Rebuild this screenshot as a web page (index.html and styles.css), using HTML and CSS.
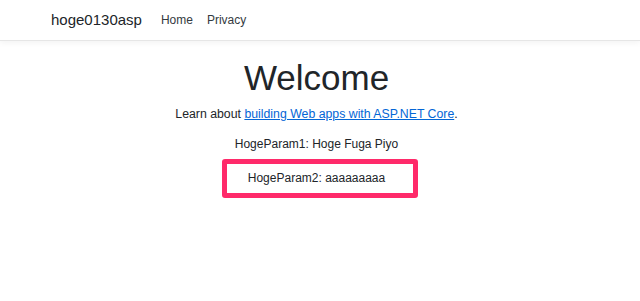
FILE: index.html
```html
<!DOCTYPE html>
<html>
  <head>
    <meta charset="utf-8">
    <title>Home Page - hoge0130asp</title>
    <link rel="stylesheet" href="styles.css">
  </head>
  <body>
    <header class="navbar">
      <a class="brand" href="#">hoge0130asp</a>
      <nav class="nav">
        <a href="#">Home</a>
        <a href="#">Privacy</a>
      </nav>
    </header>
    <main class="content">
      <h1>Welcome</h1>
      <p class="lead">Learn about <a href="#">building Web apps with ASP.NET Core</a>.</p>
      <p class="param">HogeParam1: Hoge Fuga Piyo</p>
      <div class="highlight">
        <p class="param">HogeParam2: aaaaaaaaa</p>
      </div>
    </main>
  </body>
</html>
```

FILE: styles.css
```css
body {
  margin: 0;
  font-family: "Liberation Sans", Arial, sans-serif;
  font-size: 12px;
  line-height: 18px;
  color: #212529;
  background: #fff;
}

a {
  color: #0366d6;
}

.navbar {
  display: flex;
  align-items: center;
  height: 40px;
  padding: 0 0 0 51px;
  border-bottom: 1px solid #e6e6e6;
  box-shadow: 0 2px 6px rgba(0, 0, 0, 0.05);
}

.brand {
  color: #212529;
  font-size: 15px;
  text-decoration: none;
  margin-right: 19px;
}

.nav {
  display: flex;
  gap: 14px;
}

.nav a {
  color: #343a40;
  text-decoration: none;
}

.content {
  display: flex;
  flex-direction: column;
  align-items: center;
  text-align: center;
  padding-right: 7px;
}

h1 {
  font-size: 35px;
  font-weight: 300;
  line-height: 42px;
  margin: 16px 0 5px;
}

.lead {
  font-size: 12.3px;
  margin: 1px 0 12px;
}

.lead a {
  text-decoration: underline;
}

.param {
  margin: 0;
}

.highlight {
  width: 186px;
  margin: 6px 0 0 7px;
  padding: 5px 0 6px;
  border: 5px solid #ff2a6a;
  border-radius: 3px;
}

.highlight .param {
  padding-right: 7px;
}
```
